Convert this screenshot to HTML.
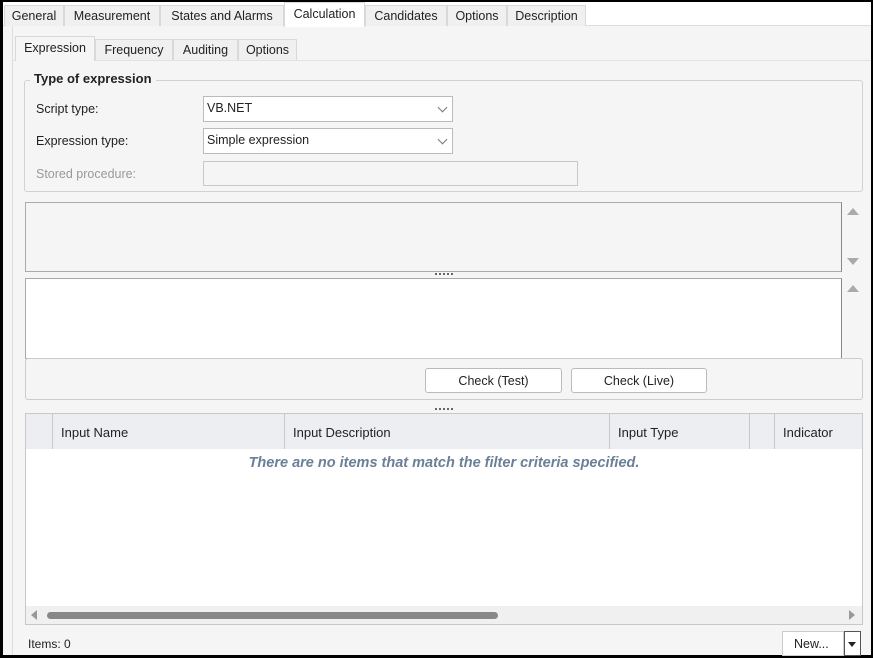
<!DOCTYPE html>
<html><head><style>
*{box-sizing:border-box;margin:0;padding:0}
body{width:873px;height:658px;background:#000;position:relative;overflow:hidden;font-family:"Liberation Sans",sans-serif;font-size:12.5px;color:#222}
.a{position:absolute}
.tab{position:absolute;top:5px;height:21px;background:#f0f0f0;border:1px solid #d9d9d9;border-bottom:none;padding:3px 0 0 0;text-align:center;font-size:12.5px}
.itab{position:absolute;top:39px;height:21px;background:#f0f0f0;border:1px solid #d9d9d9;border-bottom:none;padding:3px 0 0;text-align:center;font-size:12.5px}
.combo{position:absolute;left:203px;width:250px;height:26px;background:#fff;border:1px solid #bbb;padding:4px 3px;font-size:12.5px}
.chev{position:absolute;right:6px;top:7px;width:7px;height:7px;border-right:1px solid #777;border-bottom:1px solid #777;transform:rotate(45deg)}
.lbl{position:absolute;left:36px;font-size:12.5px}
.btn{position:absolute;top:368px;height:25px;background:#fff;border:1px solid #bbb;border-radius:3px;text-align:center;padding-top:5px}
.dots{position:absolute;left:435px;width:18px;height:2px;background:repeating-linear-gradient(90deg,#666 0 2px,transparent 2px 4px)}
.th{position:absolute;top:414px;height:35px;border-left:1px solid #c8c8c8;padding:11px 0 0 8px;font-size:13px}
.up{width:0;height:0;border-left:6px solid transparent;border-right:6px solid transparent;border-bottom:7px solid #aaa;position:absolute}
.dn{width:0;height:0;border-left:6px solid transparent;border-right:6px solid transparent;border-top:7px solid #aaa;position:absolute}
</style></head><body>
<div class="a" style="left:3px;top:2px;width:868px;height:653px;background:#f5f5f5"></div>
<div class="a" style="left:3px;top:2px;width:868px;height:24px;background:#fff;border-bottom:1px solid #ddd"></div>
<div class="a" style="left:12px;top:26px;width:1px;height:629px;background:#ddd"></div>
<div class="tab" style="left:4px;width:60px">General</div>
<div class="tab" style="left:64px;width:96px">Measurement</div>
<div class="tab" style="left:160px;width:124px">States and Alarms</div>
<div class="tab" style="left:284px;width:81px;top:2px;height:25px;background:#fff;padding-top:4px">Calculation</div>
<div class="tab" style="left:365px;width:82px">Candidates</div>
<div class="tab" style="left:447px;width:60px">Options</div>
<div class="tab" style="left:507px;width:79px">Description</div>

<div class="a" style="left:13px;top:60px;width:858px;height:1px;background:#e2e2e2"></div>
<div class="itab" style="left:95px;width:78px">Frequency</div>
<div class="itab" style="left:173px;width:65px">Auditing</div>
<div class="itab" style="left:238px;width:59px">Options</div>
<div class="itab" style="left:15px;width:80px;top:36px;height:25px;background:#f5f5f5;padding-top:4px">Expression</div>

<div class="a" style="left:24px;top:80px;width:839px;height:112px;border:1px solid #cfd3d8;border-radius:3px"></div>
<div class="a" style="left:30px;top:71px;background:#f5f5f5;padding:0 4px;font-weight:bold;font-size:13px">Type of expression</div>
<div class="lbl" style="top:102px">Script type:</div>
<div class="combo" style="top:96px">VB.NET<div class="chev"></div></div>
<div class="lbl" style="top:134px">Expression type:</div>
<div class="combo" style="top:128px">Simple expression<div class="chev"></div></div>
<div class="lbl" style="top:167px;color:#999">Stored procedure:</div>
<div class="a" style="left:203px;top:161px;width:375px;height:25px;border:1px solid #c8c8c8;background:#f5f5f5"></div>

<div class="a" style="left:25px;top:202px;width:817px;height:70px;border:1px solid #aaa;border-right:1px solid #888;background:#f5f5f5"></div>
<div class="up" style="left:847px;top:208px"></div>
<div class="dn" style="left:847px;top:258px"></div>
<div class="dots" style="top:273px"></div>
<div class="a" style="left:25px;top:278px;width:817px;height:81px;border:1px solid #aaa;border-right:1px solid #888;background:#fff"></div>
<div class="up" style="left:847px;top:285px"></div>
<div class="a" style="left:25px;top:358px;width:838px;height:42px;border:1px solid #ccc;border-radius:3px;background:#f5f5f5"></div>
<div class="btn" style="left:425px;width:137px">Check (Test)</div>
<div class="btn" style="left:571px;width:136px">Check (Live)</div>
<div class="dots" style="top:408px"></div>

<div class="a" style="left:25px;top:413px;width:838px;height:212px;border:1px solid #c8c8c8;background:#fff"></div>
<div class="a" style="left:26px;top:414px;width:836px;height:35px;background:#eceef2"></div>
<div class="th" style="left:52px;width:232px">Input Name</div>
<div class="th" style="left:284px;width:325px">Input Description</div>
<div class="th" style="left:609px;width:140px">Input Type</div>
<div class="th" style="left:749px;width:25px"></div>
<div class="th" style="left:774px;width:88px">Indicator</div>
<div class="a" style="left:26px;top:455px;width:836px;text-align:center;font-style:italic;font-weight:bold;color:#6a7f98;font-size:14.5px">There are no items that match the filter criteria specified.</div>
<div class="a" style="left:26px;top:606px;width:836px;height:18px;background:#f0f0f0"></div>
<div class="a" style="left:31px;top:610px;width:0;height:0;border-top:5px solid transparent;border-bottom:5px solid transparent;border-right:6px solid #999"></div>
<div class="a" style="left:47px;top:612px;width:451px;height:7px;background:#888;border-radius:4px"></div>
<div class="a" style="left:849px;top:610px;width:0;height:0;border-top:5px solid transparent;border-bottom:5px solid transparent;border-left:6px solid #999"></div>

<div class="a" style="left:28px;top:637px;font-size:12px">Items: 0</div>
<div class="a" style="left:782px;top:631px;width:62px;height:25px;background:#fff;border:1px solid #ccc;padding:5px 0 0 11px">New...</div>
<div class="a" style="left:844px;top:631px;width:17px;height:25px;background:#fff;border:1px solid #555"></div>
<div class="a" style="left:848px;top:642px;width:0;height:0;border-left:4px solid transparent;border-right:4px solid transparent;border-top:5px solid #222"></div>
</body></html>
